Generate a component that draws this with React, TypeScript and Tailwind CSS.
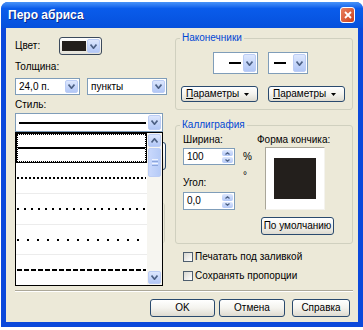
import type { ReactNode } from "react";

function Chevron({ up = false, small = false }: { up?: boolean; small?: boolean }) {
	const w = small ? 5 : 7;
	const h = small ? 3 : 5;
	const d = up
		? `M0.5 ${h - 0.5} L${w / 2} 0.8 L${w - 0.5} ${h - 0.5}`
		: `M0.5 0.5 L${w / 2} ${h - 0.8} L${w - 0.5} 0.5`;
	return (
		<svg width={w} height={h} viewBox={`0 0 ${w} ${h}`}>
			<path d={d} fill="none" stroke="#4d6185" strokeWidth={small ? 1.3 : 1.7} />
		</svg>
	);
}

function ArrowBox({ className = "", up = false }: { className?: string; up?: boolean }) {
	return (
		<div
			className={`flex items-center justify-center rounded-[2px] border border-[#bccdf5] bg-gradient-to-b from-[#dde7fd] to-[#b2c7f6] ${className}`}
		>
			<Chevron up={up} />
		</div>
	);
}

function Combo({ text, className = "" }: { text: string; className?: string }) {
	return (
		<div className={`flex h-[17px] items-center border border-[#7f9db9] bg-white pl-[3px] pr-px ${className}`}>
			<span className="flex-1">{text}</span>
			<ArrowBox className="h-[13px] w-[13px]" />
		</div>
	);
}

const buttonSkin =
	"rounded-[3px] border border-[#2a4a6e] bg-gradient-to-b from-white via-[#f4f3ee] to-[#dedbd0]";

function XPButton({ children, className = "" }: { children?: ReactNode; className?: string }) {
	return <div className={`flex items-center justify-center ${buttonSkin} ${className}`}>{children}</div>;
}

function ArrowHeadCombo({ className = "", start = false }: { className?: string; start?: boolean }) {
	return (
		<div className={`flex h-[22px] items-stretch border border-[#7f9db9] bg-white p-px ${className}`}>
			<div className={`flex flex-1 items-center ${start ? "justify-end pr-[2px]" : "justify-start pl-[4px]"}`}>
				<div className="h-[2px] w-[12px] bg-black" />
			</div>
			<ArrowBox className="w-[13px]" />
		</div>
	);
}

function ParamButton() {
	return (
		<div className={`flex h-[16px] w-[77px] items-center justify-between pl-[4px] pr-[8px] ${buttonSkin}`}>
			<span>
				<span className="underline">П</span>араметры
			</span>
			<svg width="5" height="3" viewBox="0 0 5 3">
				<path d="M0 0 H5 L2.5 3 Z" fill="#000" />
			</svg>
		</div>
	);
}

function Spin({ value, className = "" }: { value: string; className?: string }) {
	return (
		<div className={`flex items-stretch border border-[#7f9db9] bg-white pl-[3px] ${className}`}>
			<span className="flex-1 self-center">{value}</span>
			<div className="flex w-[13px] flex-col gap-px p-px">
				<div className="flex flex-1 items-center justify-center rounded-[2px] bg-gradient-to-b from-[#dde7fd] to-[#b2c7f6]">
					<Chevron up small />
				</div>
				<div className="flex flex-1 items-center justify-center rounded-[2px] bg-gradient-to-b from-[#dde7fd] to-[#b2c7f6]">
					<Chevron small />
				</div>
			</div>
		</div>
	);
}

function Check({ label }: { label: string }) {
	return (
		<div className="flex h-[10px] items-center gap-[2px]">
			<div className="h-[10px] w-[10px] border border-[#4e5e6e] bg-gradient-to-br from-[#d8d7d0] to-white" />
			<span>{label}</span>
		</div>
	);
}

function DashItem({ dash, className = "" }: { dash: string; className?: string }) {
	return (
		<div className={`flex items-center border-b border-[#ececec] px-[1px] ${className}`}>
			<svg width="100%" height="2">
				<line x1="0" y1="1" x2="100%" y2="1" stroke="#000" strokeWidth="2" strokeDasharray={dash} />
			</svg>
		</div>
	);
}

function StyleList() {
	return (
		<div className="absolute left-[9px] top-[104px] flex h-[154px] w-[148px] border border-black bg-white">
			<div className="flex flex-1 flex-col">
				<div className="h-[30px] border border-black">
					<div className="flex h-full items-center border border-dotted border-black">
						<div className="h-[2px] w-full bg-black" />
					</div>
				</div>
				<DashItem dash="2 2" className="h-[31px]" />
				<DashItem dash="2 5" className="h-[31px]" />
				<DashItem dash="2 8" className="h-[30px]" />
				<DashItem dash="5 2" className="h-[30px] border-b-0" />
			</div>
			<div className="flex w-[15px] flex-col gap-px bg-[#f6f5f0] p-px">
				<ArrowBox up className="h-[13px]" />
				<div className="flex h-[29px] flex-col items-center justify-center gap-px rounded-[2px] border border-[#bccdf5] bg-gradient-to-r from-[#c9d8fc] to-[#b6cbf7]">
					<div className="h-px w-[6px] bg-[#eef3fe]" />
					<div className="h-px w-[6px] bg-[#8ca6dd]" />
					<div className="h-px w-[6px] bg-[#eef3fe]" />
					<div className="h-px w-[6px] bg-[#8ca6dd]" />
				</div>
				<div className="flex-1" />
				<ArrowBox className="h-[13px]" />
			</div>
		</div>
	);
}

export default function App() {
	return (
		<div className="h-[330px] w-[363px] overflow-hidden bg-white pl-[1px] pt-[2px] font-['Liberation_Sans',Arial,sans-serif] text-[10px] leading-[12px] text-black">
			<div className="flex h-[325px] w-[362px] flex-col rounded-t-[7px] bg-[#0b48db]">
				{/* Title bar */}
				<div className="flex h-[26px] items-center justify-between rounded-t-[7px] bg-gradient-to-b from-[#4893f8] via-[#0a5ceb] via-25% to-[#0650dc] pl-[7px] pr-[8px]">
					<span className="text-[12px] font-bold text-white [text-shadow:1px_1px_0_#0a2a8a]">Перо абриса</span>
					<div className="flex h-[16px] w-[15px] items-center justify-center rounded-[3px] border border-white bg-gradient-to-br from-[#e9805e] to-[#cc3e18]">
						<svg width="8" height="8" viewBox="0 0 8 8">
							<path d="M1 1 L7 7 M7 1 L1 7" stroke="#fff" strokeWidth="1.8" />
						</svg>
					</div>
				</div>

				<div className="flex flex-1 flex-col px-[5px] pb-[5px]">
					<div className="relative flex flex-1 flex-col bg-[#ece9d8]">
						<div className="flex pl-[9px]">
							{/* Left column */}
							<div className="flex w-[152px] flex-col pt-[9px]">
								<div className="flex h-[18px] items-center">
									<span className="w-[44px]">Цвет:</span>
									<div className="flex h-[18px] w-[43px] items-center rounded-[3px] border border-[#3c4a5c] bg-gradient-to-b from-white to-[#e3e1d8] pl-[2px] pr-px">
										<div className="h-[10px] w-[25px] bg-[#231f1c]" />
										<ArrowBox className="ml-px h-[14px] w-[13px]" />
									</div>
								</div>
								<span className="mt-[6px]">Толщина:</span>
								<div className="mt-[5px] flex gap-[7px]">
									<Combo text="24,0 п." className="w-[65px]" />
									<Combo text="пункты" className="w-[80px]" />
								</div>
								<span className="mt-[4px]">Стиль:</span>
								<div className="mt-[2px] flex h-[19px] w-[148px] items-center border border-[#7f9db9] bg-white pl-[3px] pr-px">
									<div className="h-[2px] flex-1 bg-black" />
									<ArrowBox className="ml-[2px] h-[15px] w-[13px]" />
								</div>
								<XPButton className="mr-px mt-[10px] h-[28px] w-[60px] self-end" />
								<div className="mr-[2px] mt-[33px] h-[40px] w-[30px] self-end rounded-r-[3px] border-r border-[#d0d0bf]" />
							</div>

							{/* Right column */}
							<div className="ml-[8px] flex w-[178px] flex-col pt-[4px]">
								<fieldset className="rounded-[3px] border border-[#d0d0bf] pb-[7px]">
									<legend className="ml-[4px] px-[2px] text-[#0046d5]">Наконечники</legend>
									<div className="mt-[8px] flex gap-[10px] pl-[37px]">
										<ArrowHeadCombo start className="w-[45px]" />
										<ArrowHeadCombo className="w-[40px]" />
									</div>
									<div className="mt-[12px] flex gap-[10px] pl-[5px]">
										<ParamButton />
										<ParamButton />
									</div>
								</fieldset>

								<fieldset className="mt-[9px] rounded-[3px] border border-[#d0d0bf] pb-[8px]">
									<legend className="ml-[4px] px-[2px] text-[#0046d5]">Каллиграфия</legend>
									<div className="flex pl-[7px]">
										<div className="flex w-[74px] flex-col">
											<span className="mt-[3px]">Ширина:</span>
											<div className="mt-[2px] flex items-center">
												<Spin value="100" className="h-[17px] w-[52px]" />
												<span className="ml-[8px]">%</span>
											</div>
											<div className="mt-[12px] flex items-start">
												<div className="flex flex-col">
													<span>Угол:</span>
													<Spin value="0,0" className="mt-[3px] h-[18px] w-[52px]" />
												</div>
												<span className="-mt-[7px] ml-[8px]">°</span>
											</div>
										</div>
										<div className="flex flex-col">
											<span className="mt-[3px]">Форма кончика:</span>
											<div className="ml-[8px] mt-[1px] flex h-[63px] w-[60px] items-center justify-center border border-b-[#f4f3ee] border-l-[#a9a699] border-r-[#f4f3ee] border-t-[#a9a699] bg-white">
												<div className="h-[41px] w-[42px] bg-[#231f1c]" />
											</div>
											<XPButton className="ml-[4px] mt-[7px] h-[18px] w-[73px]">По умолчанию</XPButton>
										</div>
									</div>
								</fieldset>

								<div className="mt-[8px] flex flex-col gap-[9px] pl-[8px]">
									<Check label="Печатать под заливкой" />
									<Check label="Сохранять пропорции" />
								</div>
							</div>
						</div>

						<div className="ml-[9px] mr-[5px] mt-[9px] border-b border-t border-b-white border-t-[#aca899]" />
						<div className="mt-[7px] flex justify-end pr-[8px]">
							<XPButton className="h-[18px] w-[65px]">OK</XPButton>
							<XPButton className="ml-[4px] h-[18px] w-[66px]">Отмена</XPButton>
							<XPButton className="ml-[7px] h-[18px] w-[58px]">Справка</XPButton>
						</div>

						<StyleList />
					</div>
				</div>
			</div>
		</div>
	);
}
